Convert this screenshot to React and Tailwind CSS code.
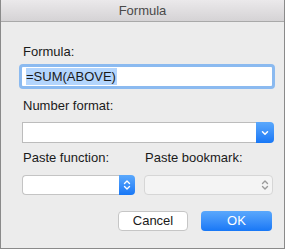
import React from 'react';

function Chevrons({ color }) {
  return (
    <svg width="8" height="12" viewBox="0 0 8 12" fill="none" stroke={color} strokeWidth="1.4" strokeLinecap="round" strokeLinejoin="round">
      <path d="M1.5 4.5 L4 2 L6.5 4.5" />
      <path d="M1.5 7.5 L4 10 L6.5 7.5" />
    </svg>
  );
}

export default function App() {
  const font = { fontFamily: '"Liberation Sans", Arial, sans-serif' };
  return (
    <div className="w-[285px] h-[249px] bg-[#ececec] border border-t-0 border-[#8a8a8a] flex flex-col text-[13px] text-[#1a1a1a]" style={font}>
      {/* title bar */}
      <div className="h-[22px] shrink-0 bg-gradient-to-b from-[#ebe9eb] to-[#d5d3d5] border-b border-[#a9a9a9] flex items-center justify-center text-[#4a4a4a] text-[13px]">
        Formula
      </div>

      <div className="flex flex-col pl-[21px] pr-[11px]">
        <div className="mt-[22px] h-[16px] leading-[16px] pl-[1px]">Formula:</div>

        <div className="mt-[4px] -ml-[3px] w-[256px] h-[25px] rounded-[4px] border-[3px] border-[#8bbaf0] bg-white flex items-center pl-[4px]">
          <span className="bg-[#b3d5fd] leading-[17px] h-[17px] pr-[1px]">=SUM(ABOVE)</span>
        </div>

        <div className="mt-[9px] h-[16px] leading-[16px] pl-[1px]">Number format:</div>

        <div className="mt-[8px] w-[252px] h-[21px] flex">
          <div className="flex-1 bg-white border border-r-0 border-[#bcbcbc]" />
          <div className="w-[18px] rounded-r-[4px] bg-gradient-to-b from-[#5aa8fc] to-[#1677f6] flex items-center justify-center">
            <svg width="8" height="6" viewBox="0 0 8 6" fill="none" stroke="white" strokeWidth="1.5" strokeLinecap="round" strokeLinejoin="round">
              <path d="M1.5 1.8 L4 4.2 L6.5 1.8" />
            </svg>
          </div>
        </div>

        <div className="mt-[7px] h-[16px] leading-[16px] flex pl-[1px]">
          <span className="w-[122px]">Paste function:</span>
          <span>Paste bookmark:</span>
        </div>

        <div className="mt-[9px] flex gap-[9px]">
          <div className="w-[113px] h-[20px] flex">
            <div className="flex-1 bg-white border border-r-0 border-[#c4c4c4] rounded-l-[4px]" />
            <div className="w-[16px] rounded-r-[4px] bg-gradient-to-b from-[#5aa8fc] to-[#1677f6] flex items-center justify-center">
              <Chevrons color="white" />
            </div>
          </div>
          <div className="w-[129px] h-[20px] bg-[#f4f4f4] border border-[#d6d6d6] rounded-[4px] flex items-center justify-end pr-[3px]">
            <Chevrons color="#9a9a9a" />
          </div>
        </div>

        <div className="mt-[16px] flex justify-end gap-[13px] pr-[1px]">
          <div className="w-[70px] h-[20px] bg-white border border-[#c6c6c6] rounded-[4px] flex items-center justify-center text-[#1a1a1a]">
            Cancel
          </div>
          <div className="w-[71px] h-[20px] rounded-[4px] bg-gradient-to-b from-[#5aa8fc] to-[#1677f6] flex items-center justify-center text-white">
            OK
          </div>
        </div>
      </div>
    </div>
  );
}
